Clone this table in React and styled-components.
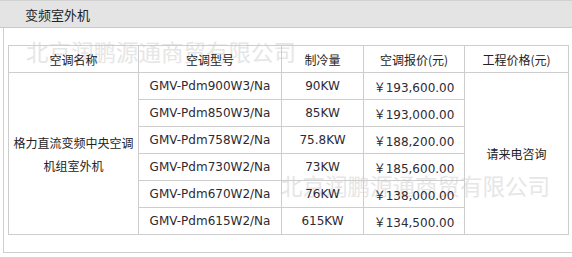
import React from "react";
import styled, { createGlobalStyle } from "styled-components";

const rows = [
  { model: "GMV-Pdm900W3/Na", cool: "90KW", price: "193,600.00" },
  { model: "GMV-Pdm850W3/Na", cool: "85KW", price: "193,000.00" },
  { model: "GMV-Pdm758W2/Na", cool: "75.8KW", price: "188,200.00" },
  { model: "GMV-Pdm730W2/Na", cool: "73KW", price: "185,600.00" },
  { model: "GMV-Pdm670W2/Na", cool: "76KW", price: "138,000.00" },
  { model: "GMV-Pdm615W2/Na", cool: "615KW", price: "134,500.00" },
];

const GlobalStyle = createGlobalStyle`
  body {
    margin: 0;
    background: #fff;
    font-family: "DejaVu Sans", "Noto Sans CJK SC", sans-serif;
    color: #333;
  }
`;

const Page = styled.div`
  width: 572px;
`;

const TitleBar = styled.div`
  height: 26px;
  background: #e4e4e4;
  border-top: 1px solid #d2d2d2;
  border-bottom: 1px solid #c9c9c9;
  display: flex;
  align-items: center;
  padding-left: 25px;
  font-family: "Noto Sans CJK SC", sans-serif;
  font-size: 13px;
  color: #222;
`;

const Box = styled.div`
  position: relative;
  margin-left: 3px;
  border-left: 1px solid #cfcfcf;
  border-bottom: 1px solid #cfcfcf;
  padding: 17px 3px 17px 4px;
`;

const Watermark = styled.div`
  position: absolute;
  left: ${(p) => p.$x}px;
  top: ${(p) => p.$y}px;
  font-family: "Noto Sans CJK SC", sans-serif;
  font-size: 22.5px;
  line-height: 1;
  color: #e6e6e6;
  white-space: nowrap;
  pointer-events: none;
`;

const Table = styled.table`
  position: relative;
  z-index: 1;
  width: 560px;
  table-layout: fixed;
  border-collapse: collapse;
  border: 1px solid #c8c8c8;
  font-size: 12px;
`;

const Col = styled.col`
  width: ${(p) => p.$w}px;
`;

const Cell = styled.td`
  height: 26px;
  padding: 0;
  border: 1px solid #cdcdcd;
  text-align: center;
  vertical-align: middle;
  white-space: nowrap;
  font-family: ${(p) =>
    p.$cjk ? '"Noto Sans CJK SC", sans-serif' : '"DejaVu Sans", "Noto Sans CJK SC", sans-serif'};
  color: ${(p) => (p.$cjk ? "#222" : "#2e2a33")};
`;

const NameCell = styled(Cell)`
  white-space: normal;
  line-height: 23px;
  padding: 0 4px;
`;

export default function App() {
  return (
    <Page>
      <GlobalStyle />
      <TitleBar>变频室外机</TitleBar>
      <Box>
        <Watermark $x={22} $y={12}>北京润鹏源通商贸有限公司</Watermark>
        <Watermark $x={276} $y={146}>北京润鹏源通商贸有限公司</Watermark>
        <Table>
          <colgroup>
            <Col $w={130} />
            <Col $w={143} />
            <Col $w={82} />
            <Col $w={101} />
            <Col $w={104} />
          </colgroup>
          <thead>
            <tr>
              <Cell $cjk>空调名称</Cell>
              <Cell $cjk>空调型号</Cell>
              <Cell $cjk>制冷量</Cell>
              <Cell $cjk>空调报价(元)</Cell>
              <Cell $cjk>工程价格(元)</Cell>
            </tr>
          </thead>
          <tbody>
            {rows.map((r, i) => (
              <tr key={r.model}>
                {i === 0 && (
                  <NameCell $cjk rowSpan={rows.length}>
                    格力直流变频中央空调
                    <br />
                    机组室外机
                  </NameCell>
                )}
                <Cell>{r.model}</Cell>
                <Cell>{r.cool}</Cell>
                <Cell>￥{r.price}</Cell>
                {i === 0 && (
                  <Cell $cjk rowSpan={rows.length}>
                    请来电咨询
                  </Cell>
                )}
              </tr>
            ))}
          </tbody>
        </Table>
      </Box>
    </Page>
  );
}
